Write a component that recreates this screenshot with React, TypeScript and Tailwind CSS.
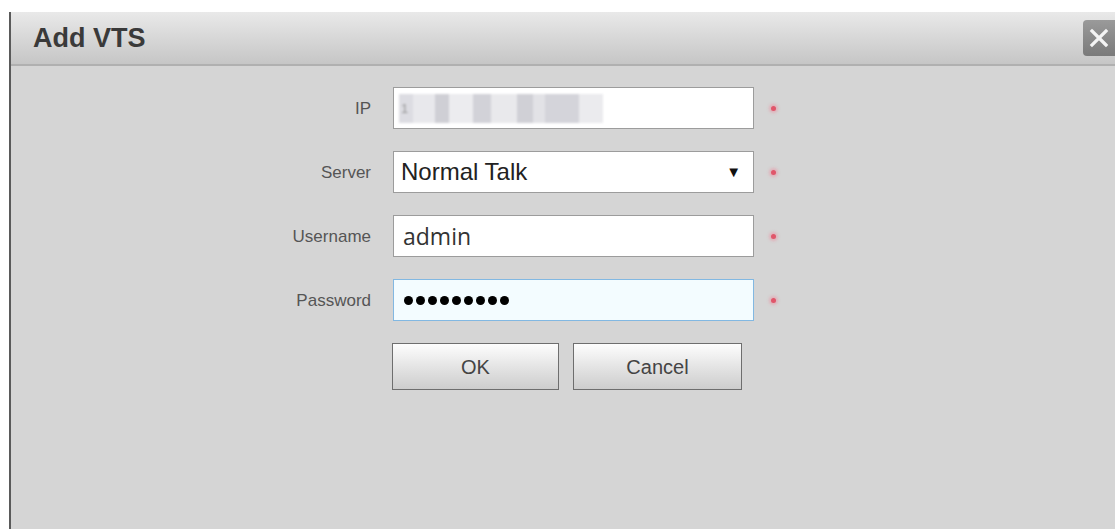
import React from "react";

// One form row: right-aligned label, the field, and the required-mark dot
function Row({ label, children }: { label: string; children: React.ReactNode }) {
  return (
    <div className="flex items-center h-[42px]">
      <div className="w-[382px] pr-[22px] text-right text-[17px] text-[#555] leading-none">{label}</div>
      {children}
      <span className="ml-[17px] w-[5px] h-[5px] rounded-full bg-[#e0566a] shadow-[0_0_3px_2px_rgba(240,130,150,0.45)]" />
    </div>
  );
}

export default function App() {
  return (
    <div className="w-[1115px] h-[529px] bg-white pt-[12px] pl-[9px] overflow-hidden font-['Liberation_Sans',Arial,sans-serif]">
      <div className="flex flex-col h-full border-l-2 border-[#5a5a5a] bg-[#d5d5d5]">
        {/* title bar */}
        <div className="flex items-start justify-between h-[54px] border-b-2 border-[#b0b0b0] bg-gradient-to-b from-[#e9e9e9] to-[#c6c6c6]">
          <div className="pl-[22px] pt-[13px] text-[27px] font-bold text-[#3a3a3a] leading-none">Add VTS</div>
          <button className="mt-[8px] w-[32px] h-[36px] rounded-l-[4px] bg-gradient-to-b from-[#9a9a9a] to-[#7a7a7a] flex items-center justify-center">
            <svg width="20" height="20" viewBox="0 0 20 20">
              <path d="M3 3 L17 17 M17 3 L3 17" stroke="#f4f4f4" strokeWidth="3.2" strokeLinecap="square" />
            </svg>
          </button>
        </div>

        {/* form */}
        <div className="flex flex-col gap-[22px] pt-[21px]">
          <Row label="IP">
            <div className="w-[361px] h-[42px] border border-[#9c9c9c] bg-white flex items-center pl-[5px]">
              <div className="w-[204px] h-[29px] flex blur-[1px]">
                <div className="w-[14px] bg-[#dcdce2] text-[13px] text-[#999] leading-[29px] pl-[2px]">1</div>
                <div className="w-[22px] bg-[#e8e8ec]" />
                <div className="w-[14px] bg-[#cfcfd5]" />
                <div className="w-[24px] bg-[#ececef]" />
                <div className="w-[18px] bg-[#d2d2d8]" />
                <div className="w-[26px] bg-[#e9e9ec]" />
                <div className="w-[16px] bg-[#d0d0d6]" />
                <div className="w-[12px] bg-[#e2e2e6]" />
                <div className="w-[34px] bg-[#d4d4da]" />
                <div className="w-[24px] bg-[#ebebee]" />
              </div>
            </div>
          </Row>
          <Row label="Server">
            <div className="w-[361px] h-[42px] border border-[#9c9c9c] bg-white flex items-center justify-between pl-[7px] pr-[12px]">
              <span className="text-[24px] text-[#222]">Normal Talk</span>
              <span className="text-[15px] text-[#111]">▼</span>
            </div>
          </Row>
          <Row label="Username">
            <div className="w-[361px] h-[42px] border border-[#9c9c9c] bg-white flex items-center pl-[9px]">
              <span className="text-[23px] text-[#333] font-['Open_Sans',sans-serif]">admin</span>
            </div>
          </Row>
          <Row label="Password">
            <div className="w-[361px] h-[42px] border border-[#82b8e2] bg-[#f3fcff] flex items-center pl-[10px] gap-[3px]">
              {Array.from({ length: 9 }).map((_, i) => (
                <span key={i} className="w-[9px] h-[9px] rounded-full bg-black" />
              ))}
            </div>
          </Row>

          {/* actions */}
          <div className="flex pl-[381px] gap-[14px]">
            <button className="w-[167px] h-[47px] border border-[#6e6e6e] bg-gradient-to-b from-[#fdfdfd] to-[#cdcdcd] text-[20px] text-[#444]">OK</button>
            <button className="w-[169px] h-[47px] border border-[#6e6e6e] bg-gradient-to-b from-[#fdfdfd] to-[#cdcdcd] text-[20px] text-[#444]">Cancel</button>
          </div>
        </div>
      </div>
    </div>
  );
}
